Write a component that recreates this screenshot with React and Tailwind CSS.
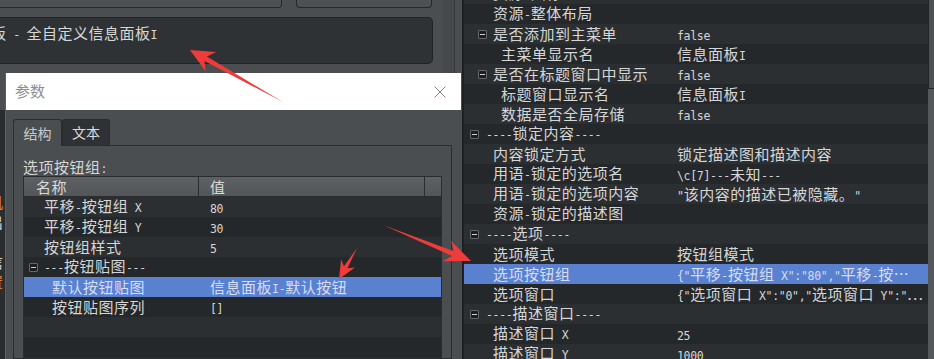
import React from 'react';

// CJK glyphs render in Noto Sans CJK at 15px, latin runs in a narrow mono so widths match the reference
const CJK = /[\u2026\u3000-\u303f\u3400-\u9fff\uff00-\uffef]/;

function Txt({ s, className = '' }) {
    const runs = [];
    for (const ch of s) {
        const c = CJK.test(ch);
        const last = runs[runs.length - 1];
        if (last && last.c === c) last.t += ch;
        else runs.push({ c, t: ch });
    }
    return (
        <span className={`whitespace-pre leading-[20px] ${className}`}>
            {runs.map((r, i) =>
                r.c ? (
                    <span key={i} className="font-['Noto_Sans_CJK_SC',sans-serif] text-[15px] tracking-[0.5px]">{r.t}</span>
                ) : (
                    <span key={i} className="font-['DejaVu_Sans_Mono',monospace] text-[11.5px] tracking-[-0.3px]">{r.t}</span>
                )
            )}
        </span>
    );
}

function Minus() {
    return (
        <span className="flex h-[9px] w-[9px] shrink-0 items-center justify-center rounded-[1px] border border-[#65686b] bg-[#1b1d1f]">
            <span className="h-px w-[5px] bg-[#cfcfcf]" />
        </span>
    );
}

const indent = {
    sec: 'pl-[6px] gap-[7px]',
    exp: 'pl-[14px] gap-[6px]',
    top: 'pl-[29px]',
    child: 'pl-[37px]',
};

const grid = [
    { n: '资源-图标', t: 'top' },
    { n: '资源-整体布局', t: 'top' },
    { n: '是否添加到主菜单', v: 'false', t: 'exp' },
    { n: '主菜单显示名', v: '信息面板I', t: 'child' },
    { n: '是否在标题窗口中显示', v: 'false', t: 'exp' },
    { n: '标题窗口显示名', v: '信息面板I', t: 'child' },
    { n: '数据是否全局存储', v: 'false', t: 'child' },
    { n: '----锁定内容----', t: 'sec' },
    { n: '内容锁定方式', v: '锁定描述图和描述内容', t: 'top' },
    { n: '用语-锁定的选项名', v: '\\c[7]---未知---', t: 'top' },
    { n: '用语-锁定的选项内容', v: '"该内容的描述已被隐藏。"', t: 'top' },
    { n: '资源-锁定的描述图', t: 'top' },
    { n: '----选项----', t: 'sec' },
    { n: '选项模式', v: '按钮组模式', t: 'top' },
    { n: '选项按钮组', v: '{"平移-按钮组 X":"80","平移-按…', t: 'top', sel: true },
    { n: '选项窗口', v: '{"选项窗口 X":"0","选项窗口 Y":"…', t: 'top' },
    { n: '----描述窗口----', t: 'sec' },
    { n: '描述窗口 X', v: '25', t: 'top' },
    { n: '描述窗口 Y', v: '1000', t: 'top' },
];

const dlgIndent = {
    sec: 'pl-[5px] gap-[6px]',
    top: 'pl-[20px]',
    child: 'pl-[28px]',
};

const params = [
    { n: '平移-按钮组 X', v: '80', t: 'top' },
    { n: '平移-按钮组 Y', v: '30', t: 'top' },
    { n: '按钮组样式', v: '5', t: 'top' },
    { n: '---按钮贴图---', t: 'sec' },
    { n: '默认按钮贴图', v: '信息面板I-默认按钮', t: 'child', sel: true },
    { n: '按钮贴图序列', v: '[]', t: 'child' },
    { n: '', t: 'top' },
    { n: '', t: 'top' },
];

const stripe = ['bg-[#2c2f32]', 'bg-[#25282a]'];

function arrow(tail, tip, headLen, headW, shaftW) {
    const dx = tip[0] - tail[0];
    const dy = tip[1] - tail[1];
    const len = Math.hypot(dx, dy);
    const ux = dx / len, uy = dy / len;
    const nx = -uy, ny = ux;
    const bx = tip[0] - ux * headLen, by = tip[1] - uy * headLen;
    const kx = tip[0] - ux * headLen * 0.75, ky = tip[1] - uy * headLen * 0.75;
    const p = [
        tail,
        [kx + nx * shaftW, ky + ny * shaftW],
        [bx + nx * headW, by + ny * headW],
        tip,
        [bx - nx * headW, by - ny * headW],
        [kx - nx * shaftW, ky - ny * shaftW],
    ];
    return p.map((q) => q.map((v) => v.toFixed(1)).join(',')).join(' ');
}

export default function App() {
    return (
        <div className="relative flex h-[359px] w-[934px] overflow-hidden bg-[#4b4e51] text-[#d6d6d6]">
            {/* main window behind the dialog */}
            <div className="flex w-[464px] shrink-0 border-r-2 border-[#1e2022]">
                <div className="flex w-[443px] flex-col">
                    <div className="flex h-[8px] gap-[14px]">
                        <div className="w-[282px] rounded-br-[4px] border-r border-b border-[#26282a] bg-[#4e5154]" />
                        <div className="w-[136px] rounded-b-[4px] border-x border-b border-[#26282a] bg-[#4e5154]" />
                    </div>
                    <div className="mt-[9px] h-[47px] w-[433px] overflow-hidden rounded-r-[5px] border-y border-r border-[#212325] bg-[#2f3235] pt-[3px]">
                        <div className="-ml-[9px] text-[#d8d8d8]">
                            <Txt s="板 - 全自定义信息面板I" />
                        </div>
                    </div>
                    <div className="mt-[46px] flex flex-1 flex-col overflow-hidden bg-[#2a2d30] pt-[40px] text-[#cfcfcf]">
                        <div className="-ml-[14px] h-[20px]"><Txt s="::" /></div>
                        <div className="-ml-[12px] h-[20px]"><Txt s="-" /></div>
                        <div className="-ml-[12px] h-[20px] text-[#d98b3a]"><Txt s="机" /></div>
                        <div className="-ml-[12px] h-[20px]"><Txt s="出" /></div>
                        <div className="-ml-[14px] h-[20px]"><Txt s="::" /></div>
                        <div className="-ml-[12px] h-[20px]"><Txt s="信" /></div>
                        <div className="-ml-[12px] h-[20px] text-[#d98b3a]"><Txt s="置" /></div>
                    </div>
                </div>
                <div className="w-[12px] border-r border-[#37393c] bg-[#46494c]" />
                <div className="flex-1" />
            </div>

            {/* property grid */}
            <div className="flex min-w-0 flex-1">
                <div className="flex min-w-0 flex-1 flex-col overflow-hidden">
                    <div className="-mt-[16px] flex flex-col">
                        {grid.map((r, i) => (
                            <div
                                key={i}
                                className={`flex h-[20px] shrink-0 items-center ${r.sel ? 'bg-[#5a80d0] text-[#d5def3]' : stripe[i % 2]}`}
                            >
                                <div className={`flex w-[213px] shrink-0 items-center ${indent[r.t]}`}>
                                    {(r.t === 'sec' || r.t === 'exp') && <Minus />}
                                    <Txt s={r.n} />
                                </div>
                                <div className="min-w-0 flex-1 overflow-hidden">
                                    {r.v && <Txt s={r.v} />}
                                </div>
                            </div>
                        ))}
                    </div>
                </div>
                <div className="w-[6px] shrink-0 bg-[#55585b]">
                    <div className="h-[89px] border-b border-l border-[#232527] bg-[#4e5154]" />
                </div>
            </div>

            {/* 参数 dialog */}
            <div className="absolute top-[73px] bottom-0 left-[5px] flex w-[456px] flex-col border-l border-[#5c5f62]">
                <div className="flex h-[37px] shrink-0 items-center justify-between bg-white pr-[15px] pl-[9px]">
                    <span className="font-['Noto_Sans_CJK_SC',sans-serif] text-[15px] text-[#8e8e8e]">参数</span>
                    <svg width="12" height="12" viewBox="0 0 12 12">
                        <path d="M0.5 0.5 L11.5 11.5 M11.5 0.5 L0.5 11.5" stroke="#7d7d7d" strokeWidth="1" fill="none" />
                    </svg>
                </div>
                <div className="flex min-h-0 flex-1 flex-col bg-[#4b4e51] pt-[9px] pr-[9px] pl-[7px]">
                    <div className="flex items-end">
                        <div className="relative z-10 -mb-px flex h-[27px] w-[49px] items-center justify-center rounded-t-[3px] border-x border-t border-[#2a2c2e] bg-[#4b4e51] font-['Noto_Sans_CJK_SC',sans-serif] text-[14px] text-[#c9c9c9]">
                            结构
                        </div>
                        <div className="flex h-[26px] w-[48px] items-center justify-center rounded-t-[3px] border-x border-t border-[#2a2c2e] bg-[#2f3235] font-['Noto_Sans_CJK_SC',sans-serif] text-[14px] text-[#dcdcdc]">
                            文本
                        </div>
                    </div>
                    <div className="flex min-h-0 flex-1 flex-col border border-[#2a2c2e] px-[9px] pt-[11px]">
                        <div className="h-[19px] overflow-hidden leading-[18px]">
                            <Txt s="选项按钮组:" className="leading-[18px]" />
                        </div>
                        <div className="flex min-h-0 flex-1 flex-col overflow-hidden border border-[#2a2c2e]">
                            <div className="flex h-[20px] shrink-0 items-center border-b border-[#2a2c2e] bg-gradient-to-b from-[#5e6164] to-[#535659] text-[#dadada]">
                                <div className="flex h-full w-[175px] items-center border-r border-[#2a2c2e] pl-[12px]">
                                    <Txt s="名称" />
                                </div>
                                <div className="flex h-full w-[226px] items-center border-r border-[#2a2c2e] pl-[11px]">
                                    <Txt s="值" />
                                </div>
                                <div className="flex-1" />
                            </div>
                            {params.map((r, i) => (
                                <div
                                    key={i}
                                    className={`flex h-[20px] shrink-0 items-center ${r.sel ? 'bg-[#5a80d0] text-[#d5def3]' : stripe[i % 2]}`}
                                >
                                    <div className={`flex w-[186px] shrink-0 items-center ${dlgIndent[r.t]}`}>
                                        {r.t === 'sec' && <Minus />}
                                        <Txt s={r.n} />
                                    </div>
                                    <div className="min-w-0 flex-1">{r.v && <Txt s={r.v} />}</div>
                                </div>
                            ))}
                        </div>
                    </div>
                </div>
            </div>

            {/* red annotation arrows */}
            <svg className="pointer-events-none absolute inset-0" width="934" height="359">
                <polygon points={arrow([283, 102], [190, 50], 24, 11, 2.5)} fill="#f03b3b" />
                <polygon points={arrow([383, 225], [471, 261], 26, 11, 2.5)} fill="#f03b3b" />
                <polygon points={arrow([357, 248], [339, 279], 18, 8, 2)} fill="#f03b3b" />
            </svg>
        </div>
    );
}
